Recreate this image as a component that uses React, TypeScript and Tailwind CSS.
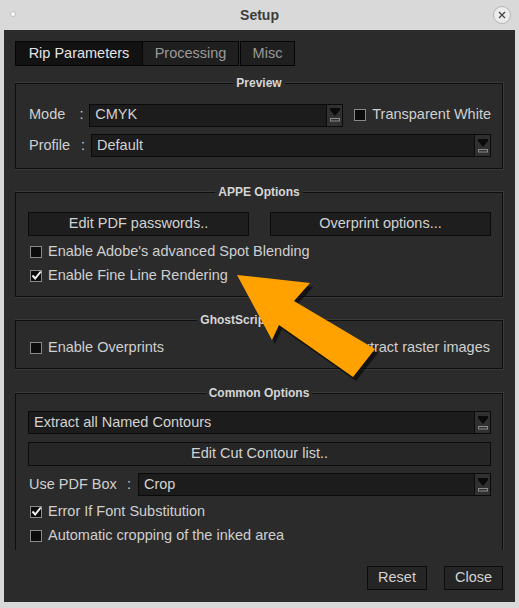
import type { ReactNode } from "react";

function DropArrow() {
  return (
    <div className="flex h-full w-[16px] shrink-0 flex-col items-center justify-center border-l border-[#0c0c0c] bg-[#303030]">
      <svg width="12" height="16" viewBox="0 0 12 16">
        <rect x="1" y="1" width="10" height="2" fill="#0a0a0a" />
        <path d="M1 3 H11 L6 9 Z" fill="#0a0a0a" />
        <rect x="1.5" y="11.5" width="9" height="2.5" fill="none" stroke="#8a8a8a" strokeWidth="1" />
      </svg>
    </div>
  );
}

function Select({ value, className = "" }: { value: string; className?: string }) {
  return (
    <div className={`flex h-[23px] shrink-0 items-stretch border border-[#0a0a0a] bg-[#1c1c1c] ${className}`}>
      <div className="flex flex-1 items-center pl-[5px] text-[14.5px] text-[#d2d2d2]">{value}</div>
      <DropArrow />
    </div>
  );
}

function Check({ label, checked = false, className = "" }: { label: string; checked?: boolean; className?: string }) {
  return (
    <div className={`flex h-[24px] items-center gap-[6px] whitespace-nowrap text-[14.5px] text-[#cfcfcf] ${className}`}>
      <div className="relative h-[12px] w-[12px] shrink-0 border border-[#8a8a8a] bg-[#0c0c0c]">
        {checked && (
          <svg className="absolute left-[0px] top-[-1px]" width="11" height="11" viewBox="0 0 11 11">
            <path d="M1.5 5.5 L4.2 8.5 L9.8 1.5" fill="none" stroke="#f2f2f2" strokeWidth="2" />
          </svg>
        )}
      </div>
      <span>{label}</span>
    </div>
  );
}

function Button({ label, className = "" }: { label: string; className?: string }) {
  return (
    <div className={`flex h-[24px] items-center justify-center border border-[#0c0c0c] bg-[#1e1e1e] text-[14.5px] text-[#d2d2d2] ${className}`}>
      {label}
    </div>
  );
}

function Group({ title, children, className = "" }: { title: string; children: ReactNode; className?: string }) {
  return (
    <div className={`relative mr-[1px] border border-[#0e0e0e] shadow-[0_0_0_1px_#3a3a3a] ${className}`}>
      <div className="absolute left-0 right-0 top-[-9px] flex justify-center">
        <span className="bg-[#2b2b2b] px-[3px] text-[12px] font-bold leading-[16px] text-[#d6d6d6]">{title}</span>
      </div>
      {children}
    </div>
  );
}

function Tab({ label, active = false, className = "" }: { label: string; active?: boolean; className?: string }) {
  return (
    <div
      className={`flex h-[25px] items-center justify-center border border-[#050505] text-[14.5px] ${
        active ? "bg-[#121212] text-[#e4e4e4]" : "bg-[#1f1f1f] text-[#9a9a9a]"
      } ${className}`}
    >
      {label}
    </div>
  );
}

export default function App() {
  return (
    <div
      className="relative h-[608px] w-[519px] overflow-hidden bg-[#d9d9d9]"
      style={{ fontFamily: '"Liberation Sans", Arial, sans-serif' }}
    >
      {/* title bar */}
      <div className="relative flex h-[30px] items-center justify-center">
        <div className="absolute left-[10px] top-[11px] h-[6px] w-[6px] rounded-full border border-[#bbbbbb] bg-white" />
        <span className="text-[14px] font-bold text-[#3c3c3c]">Setup</span>
        <div className="absolute right-[8px] top-[6px] flex h-[18px] w-[18px] items-center justify-center rounded-full border border-[#b5b5b5] bg-[#ececec]">
          <svg width="8" height="8" viewBox="0 0 8 8">
            <path d="M1 1 L7 7 M7 1 L1 7" stroke="#444" strokeWidth="1.3" />
          </svg>
        </div>
      </div>

      {/* dark body */}
      <div className="mx-[4px] flex h-[572px] flex-col bg-[#2b2b2b] px-[11px] pt-[11px]">
        <div className="flex">
          <Tab label="Rip Parameters" active className="w-[128px]" />
          <Tab label="Processing" className="w-[96px] border-l-0" />
          <Tab label="Misc" className="ml-[1px] w-[55px]" />
        </div>

        <div className="h-[484px] overflow-hidden pt-[17px]">
          <Group title="Preview" className="h-[86px] pl-[13px] pr-[11px] pt-[19px]">
            <div className="flex items-center">
              <span className="w-[52px] text-[14.5px] text-[#cfcfcf]">Mode</span>
              <span className="w-[10px] text-[14.5px] text-[#cfcfcf]">:</span>
              <Select value="CMYK" className="w-[254px]" />
              <Check label="Transparent White" className="ml-[11px]" />
            </div>
            <div className="mt-[7px] flex items-center">
              <span className="w-[52px] text-[14.5px] text-[#cfcfcf]">Profile</span>
              <span className="w-[10px] text-[14.5px] text-[#cfcfcf]">:</span>
              <Select value="Default" className="flex-1" />
            </div>
          </Group>

          <Group title="APPE Options" className="mt-[23px] h-[105px] pl-[12px] pr-[11px] pt-[19px]">
            <div className="flex gap-[21px]">
              <Button label="Edit PDF passwords.." className="w-[221px]" />
              <Button label="Overprint options..." className="flex-1" />
            </div>
            <Check label="Enable Adobe's advanced Spot Blending" className="ml-[2px] mt-[4px]" />
            <Check label="Enable Fine Line Rendering" checked className="ml-[2px]" />
          </Group>

          <Group title="GhostScript Options" className="mt-[23px] flex h-[49px] pl-[14px] pr-[11px] pt-[15px]">
            <Check label="Enable Overprints" className="w-[305px]" />
            <Check label="Extract raster images" />
          </Group>

          <Group title="Common Options" className="mt-[24px] h-[200px] pl-[12px] pr-[11px] pt-[17px]">
            <Select value="Extract all Named Contours" />
            <Button label="Edit Cut Contour list.." className="mt-[8px] bg-[#262626]" />
            <div className="mt-[7px] flex items-center">
              <span className="w-[99px] pl-[1px] text-[14.5px] text-[#cfcfcf]">Use PDF Box</span>
              <span className="w-[11px] text-[14.5px] text-[#cfcfcf]">:</span>
              <Select value="Crop" className="flex-1" />
            </div>
            <Check label="Error If Font Substitution" checked className="ml-[2px] mt-[4px]" />
            <Check label="Automatic cropping of the inked area" className="ml-[2px]" />
          </Group>
        </div>

        <div className="mt-[16px] flex justify-end gap-[17px] pr-[1px]">
          <Button label="Reset" className="w-[60px] bg-[#252525]" />
          <Button label="Close" className="w-[59px] bg-[#252525]" />
        </div>
      </div>

      {/* orange annotation arrow */}
      <svg className="pointer-events-none absolute left-0 top-0" width="519" height="608" viewBox="0 0 519 608">
        <polygon
          points="240,279 313,287 297,305 378,353 356,381 282,329 275,344"
          fill="#000"
          opacity="0.55"
        />
        <polygon points="237,275 310,283 294,301 375,349 353,377 279,325 272,340" fill="#ffa200" />
      </svg>
    </div>
  );
}
